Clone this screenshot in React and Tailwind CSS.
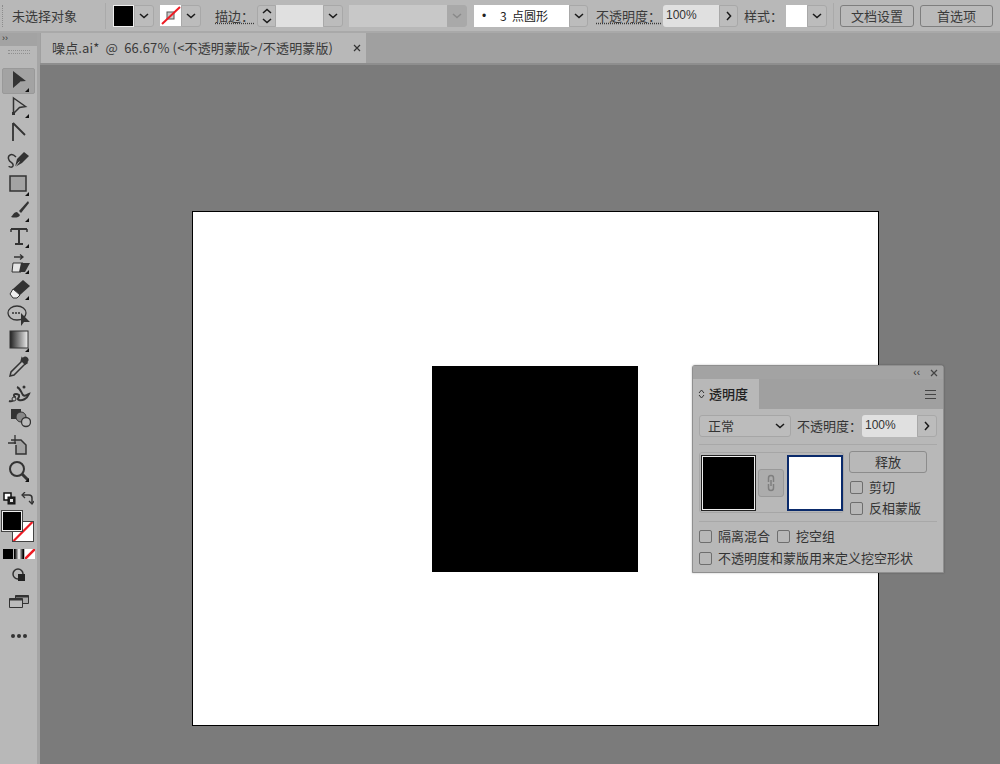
import React from 'react';

const cjk = 'font-["Noto_Sans_CJK_SC","Liberation_Sans",sans-serif]';

const Chevron = ({ className = '', color = '#1a1a1a' }) => (
    <svg width="10" height="6" viewBox="0 0 10 6" className={className}>
        <path d="M1 1l4 3.6L9 1" fill="none" stroke={color} strokeWidth="1.5" />
    </svg>
);

const ChevronBox = ({ w = 'w-[20px]', disabled }) => (
    <div className={`${w} h-[22px] flex items-center justify-center rounded-r-[3px] border border-[#a8a8a8] ${disabled ? 'bg-[#a9a9a9] border-[#a9a9a9]' : 'bg-[#bcbcbc]'}`}>
        <Chevron color={disabled ? '#8a8a8a' : '#1a1a1a'} />
    </div>
);

const NoStroke = () => (
    <svg width="21" height="21" viewBox="0 0 21 21" className="bg-white">
        <rect x="7" y="7" width="7" height="7" fill="#ccc" stroke="#555" strokeWidth="1" />
        <path d="M2 19L20 2" stroke="#ed1c24" strokeWidth="2" />
    </svg>
);

const Corner = () => <path d="M24 24h-4l4-4z" fill="#111" />;

// tools, top to bottom, in a 26x26 box
const tools = [
    <><path d="M8 3l13 10-6 .6 0 .4-7 6z" fill="#333" /><Corner /></>,
    <><path d="M8.500 4l12 8.500-6 1-6 6z" fill="none" stroke="#333" strokeWidth="1.500" /><path d="M7 18h3v3H7z" fill="#333" /><Corner /></>,
    <path d="M8 3v18M8 3l12 12" fill="none" stroke="#333" strokeWidth="1.800" />,
    <><path d="M10 21l2-8 7-7 5 4-7 7z" fill="#333" /><path d="M10 21l4.500-5.500" stroke="#bbb" strokeWidth="1" /><path d="M11 11C6 6 2 10 4 14c1 3 5 2 4 6-1 2-4 1-4 0" fill="none" stroke="#333" strokeWidth="1.500" /></>,
    <><rect x="5" y="4" width="16" height="15" fill="#a3a3a3" stroke="#333" strokeWidth="1.500" /><Corner /></>,
    <><path d="M23 3l-9 10 2 2 8-10z" fill="#333" /><path d="M12 14c-3 0-4 3-6 5 3 1 8 1 9-2z" fill="#333" /><Corner /></>,
    <><path d="M6 5h16M14 5v15M10 20h8" fill="none" stroke="#333" strokeWidth="2" /><path d="M6 5v3M22 5v3" stroke="#333" strokeWidth="1.500" /><Corner /></>,
    <><path d="M8 13l-1 9h9l2-9z" fill="#e4e4e4" stroke="#333" strokeWidth="1" /><path d="M16 13h9l-5 9h-6z" fill="#333" /><path d="M9 7h9M15 4.500L18 7l-3 2.500" fill="none" stroke="#333" strokeWidth="1.300" /><Corner /></>,
    <><path d="M8 13l10-9 7 6-10 9z" fill="#333" /><path d="M8 13l7 6-3 3H8l-3-4z" fill="#eee" stroke="#333" strokeWidth="1" /><Corner /></>,
    <><ellipse cx="12" cy="11" rx="9" ry="7" fill="#bbb" stroke="#333" strokeWidth="1.300" /><path d="M7 11h9" stroke="#333" strokeWidth="1.300" strokeDasharray="2 1" /><path d="M16 11v13l3-4h6z" fill="#333" /></>,
    <><defs><linearGradient id="grad"><stop offset="0" stopColor="#222" /><stop offset="1" stopColor="#eee" /></linearGradient></defs><rect x="5" y="3" width="18" height="17" fill="url(#grad)" stroke="#333" strokeWidth="1" /><Corner /></>,
    <><path d="M17 4l5 5-3 2-1 1-9 9-4 1 1-4 9-9 1-1z" fill="#bbb" stroke="#333" strokeWidth="1.500" /><path d="M18 3.500a3 3 0 014.500 4.500L20 11l-4-4z" fill="#333" /></>,
    <><path d="M4 21c3 1 6-1 6-4-3-3 1-4 4-2 1 3-3 4 0 5 3 1 8-1 10-6-3 1-4 3-6 1-2-3-3-7-6-8" fill="none" stroke="#333" strokeWidth="2" /><circle cx="9" cy="19" r="2" fill="#bbb" stroke="#333" /><circle cx="19" cy="7" r="1.500" fill="#333" /></>,
    <><rect x="6" y="3" width="10" height="10" fill="#333" /><circle cx="16" cy="11" r="5" fill="#888" stroke="#333" /><circle cx="21" cy="16" r="4.500" fill="#bbb" stroke="#333" strokeWidth="1.300" /></>,
    <><path d="M6 8h10l5 5v9H11V13" fill="#a3a3a3" stroke="#333" strokeWidth="1.500" /><path d="M3 11h8M10 3v9" fill="none" stroke="#333" strokeWidth="1.300" /></>,
    <><circle cx="12" cy="11" r="7" fill="none" stroke="#333" strokeWidth="2" /><path d="M17 16l6 6" stroke="#333" strokeWidth="3" /><Corner /></>,
];

const Tool = ({ children, active }) => (
    <div className={`w-[33px] h-[26px] flex items-center justify-center pr-[2px] ${active ? 'rounded-[2px] bg-[#a3a3a3] border border-[#999]' : ''}`}>
        <svg width="26" height="26" viewBox="0 0 26 26">{children}</svg>
    </div>
);

const FillStroke = () => (
    <div className="w-[33px] h-[32px] grid grid-cols-[10px_10px_12px] grid-rows-[10px_10px_11px]">
        <div className="col-start-2 col-span-2 row-start-2 row-span-2 border border-[#444] bg-white overflow-hidden">
            <svg width="100%" height="100%" viewBox="0 0 21 21"><path d="M0 21L21 0" stroke="#ed1c24" strokeWidth="2.500" /></svg>
        </div>
        <div className="col-start-1 col-span-2 row-start-1 row-span-2 border border-[#eee] outline outline-1 outline-[#444] bg-black z-10" />
    </div>
);

const Check = ({ label }) => (
    <div className="flex items-center gap-[6px]">
        <div className="w-[13px] h-[13px] rounded-[2px] border border-[#6e6e6e] bg-[#b8b8b8]" />
        <span className="text-[13px] leading-[16px] text-[#333]">{label}</span>
    </div>
);

const App = () => {
    return (
        <div className={`relative w-[1000px] h-[764px] overflow-hidden bg-[#7b7b7b] flex flex-col ${cjk}`}>
            {/* Control bar */}
            <div className="h-[33px] shrink-0 bg-[#b8b8b8] border-b-2 border-[#a9a9a9] flex items-center text-[13px] text-[#3a3a3a]">
                <div className="ml-[2px] w-[1px] h-[22px] border-l border-dotted border-[#8c8c8c]" />
                <span className="ml-[9px] w-[64px] tracking-[0px] whitespace-nowrap">未选择对象</span>
                <div className="ml-[29px] w-[1px] h-[26px] bg-[#aaa]" />
                <div className="ml-[7px] flex items-center">
                    <div className="w-[21px] h-[22px] bg-black border border-[#eee]" />
                    <ChevronBox />
                </div>
                <div className="ml-[6px] flex items-center">
                    <NoStroke />
                    <ChevronBox />
                </div>
                <span className="ml-[14px] w-[36px] underline decoration-dotted underline-offset-2 whitespace-nowrap">描边：</span>
                <div className="ml-[6px] flex items-center">
                    <div className="w-[19px] h-[22px] flex flex-col items-center justify-center gap-[4px] rounded-l-[3px] border border-[#a8a8a8] bg-[#bcbcbc]">
                        <Chevron className="rotate-180" />
                        <Chevron />
                    </div>
                    <div className="w-[47px] h-[22px] bg-[#e0e0e0]" />
                    <ChevronBox />
                </div>
                <div className="ml-[6px] w-[98px] h-[22px] bg-[#c8c8c8]" />
                <ChevronBox disabled />
                <div className="ml-[7px] w-[95px] h-[22px] bg-white flex items-center pl-[8px] text-[12px] text-[#222] whitespace-pre">
                    <span className="w-[18px] font-['Liberation_Sans']">•</span>
                    <span>3  点圆形</span>
                </div>
                <ChevronBox w="w-[19px]" />
                <span className="ml-[8px] w-[61px] underline decoration-dotted underline-offset-2 whitespace-nowrap">不透明度：</span>
                <div className="ml-[6px] w-[56px] h-[22px] bg-[#e0e0e0] rounded-l-[3px] pl-[3px] text-[12px] leading-[20px] text-[#333] font-['Liberation_Sans']">100%</div>
                <div className="w-[19px] h-[22px] flex items-center justify-center rounded-r-[3px] border border-[#a8a8a8] bg-[#bcbcbc]">
                    <Chevron className="-rotate-90" />
                </div>
                <span className="ml-[6px] w-[36px] whitespace-nowrap">样式：</span>
                <div className="ml-[6px] w-[21px] h-[22px] bg-white" />
                <ChevronBox />
                <div className="ml-[6px] w-[1px] h-[26px] bg-[#aaa]" />
                <div className="ml-[6px] w-[74px] h-[22px] flex items-center justify-center rounded-[3px] border border-[#7e7e7e] bg-[#bababa] whitespace-nowrap">文档设置</div>
                <div className="ml-[6px] w-[73px] h-[22px] flex items-center justify-center rounded-[3px] border border-[#7e7e7e] bg-[#bababa] whitespace-nowrap">首选项</div>
            </div>

            <div className="flex flex-1 min-h-0">
                {/* Tools */}
                <div className="w-[37px] shrink-0 bg-[#b8b8b8] flex flex-col items-center">
                    <div className="w-full h-[13px] bg-[#a3a3a3] text-[9px] leading-[11px] pl-[2px] text-[#333] font-['Liberation_Sans']">››</div>
                    <div className="mt-[4px] w-[22px] h-[4px] border-y border-dotted border-[#8f8f8f]" />
                    <div className="mt-[14px] flex flex-col items-center">
                        {tools.map((t, i) => (
                            <Tool key={i} active={i === 0}>{t}</Tool>
                        ))}
                    </div>
                    <div className="mt-[4px] w-[33px] h-[20px] flex items-center justify-between px-[1px]">
                        <svg width="13" height="13" viewBox="0 0 13 13"><rect x="1" y="1" width="7" height="7" fill="#fff" stroke="#111" strokeWidth="1.500" /><rect x="5" y="5" width="7" height="7" fill="#222" stroke="#111" /><rect x="7" y="7" width="3" height="3" fill="#ddd" /></svg>
                        <svg width="13" height="13" viewBox="0 0 13 13"><path d="M1 3h7a3 3 0 013 3v6" fill="none" stroke="#333" strokeWidth="1.500" /><path d="M4 0L1 3l3 3M8 9l3 3 2-3" fill="none" stroke="#333" strokeWidth="1.300" /></svg>
                    </div>
                    <div className="mt-[3px]"><FillStroke /></div>
                    <div className="mt-[6px] w-[32px] h-[10px] flex gap-[1px]">
                        <div className="flex-1 bg-black" />
                        <div className="flex-1 bg-gradient-to-r from-black via-white to-black" />
                        <div className="flex-1 bg-white overflow-hidden">
                            <svg width="100%" height="100%" viewBox="0 0 10 10"><path d="M0 10L10 0" stroke="#ed1c24" strokeWidth="2.500" /></svg>
                        </div>
                    </div>
                    <div className="mt-[9px]">
                        <svg width="14" height="14" viewBox="0 0 14 14"><circle cx="6" cy="6" r="5" fill="none" stroke="#333" strokeWidth="1.500" /><rect x="6" y="6" width="7" height="7" fill="#222" /></svg>
                    </div>
                    <div className="mt-[11px]">
                        <svg width="20" height="15" viewBox="0 0 20 15"><path d="M6.500 2.500h13v8h-13z" fill="#a8a8a8" stroke="#333" /><path d="M6.500 2.500h13v2h-13z" fill="#333" /><path d="M.5 5.500h13v9H.5z" fill="#bbb" stroke="#333" /><path d="M.5 5.500h13v2H.5z" fill="#333" /></svg>
                    </div>
                    <div className="mt-[26px] flex gap-[2px]">
                        <div className="w-[4px] h-[4px] rounded-full bg-[#333]" />
                        <div className="w-[4px] h-[4px] rounded-full bg-[#333]" />
                        <div className="w-[4px] h-[4px] rounded-full bg-[#333]" />
                    </div>
                </div>
                <div className="w-[3px] shrink-0 bg-[#a5a5a5]" />

                <div className="flex-1 flex flex-col min-w-0">
                    {/* Tab strip */}
                    <div className="h-[32px] shrink-0 bg-[#a0a0a0] border-b-2 border-[#8e8e8e] pl-[1px]">
                        <div className="w-[325px] h-[30px] bg-[#b8b8b8] flex items-center pl-[11px] text-[13px] tracking-[0.15px] text-[#3a3a3a] whitespace-pre">
                            <span className="w-[300px]">噪点.ai*  @  66.67% (&lt;不透明蒙版&gt;/不透明蒙版)</span>
                            <svg width="8" height="8" viewBox="0 0 8 8" className="ml-[1px]"><path d="M1 1l6 6M7 1L1 7" stroke="#333" strokeWidth="1.200" /></svg>
                        </div>
                    </div>
                    {/* Canvas */}
                    <div className="flex-1 pl-[152px] pt-[146px]">
                        <div className="w-[687px] h-[515px] bg-white border border-black pl-[239px] pt-[154px]">
                            <div className="w-[206px] h-[206px] bg-black" />
                        </div>
                    </div>
                </div>
            </div>

            {/* Floating transparency panel */}
            <div className="absolute left-[692px] top-[365px] w-[252px] h-[208px] bg-[#b8b8b8] border border-[#8f8f8f] rounded-t-[3px] flex flex-col text-[13px] text-[#333] shadow-[0_0_2px_rgba(0,0,0,0.3)]">
                <div className="h-[13px] bg-[#a3a3a3] flex items-center justify-end gap-[10px] pr-[5px]">
                    <span className="text-[10px] leading-[10px] text-[#333] font-['Liberation_Sans']">‹‹</span>
                    <svg width="8" height="8" viewBox="0 0 8 8"><path d="M1 1l6 6M7 1L1 7" stroke="#444" strokeWidth="1.200" /></svg>
                </div>
                <div className="h-[30px] bg-[#a0a0a0] flex items-center">
                    <div className="w-[66px] h-full bg-[#b8b8b8] flex items-center pl-[5px] gap-[4px]">
                        <svg width="7" height="10" viewBox="0 0 7 10"><path d="M1 4l2.500-3L6 4M1 6l2.500 3L6 6" fill="none" stroke="#333" /></svg>
                        <span className="font-medium text-[#222] whitespace-nowrap">透明度</span>
                    </div>
                    <div className="ml-auto mr-[7px] w-[11px] h-[9px] border-y border-[#444] flex items-center">
                        <div className="w-full h-[1px] bg-[#444]" />
                    </div>
                </div>
                <div className="px-[6px] pt-[6px] flex flex-col">
                    <div className="flex items-center">
                        <div className="w-[92px] h-[22px] flex items-center justify-between pl-[8px] pr-[5px] rounded-[3px] border border-[#a6a6a6] bg-[#bcbcbc]">
                            <span>正常</span>
                            <Chevron />
                        </div>
                        <span className="ml-[6px] w-[65px] whitespace-nowrap">不透明度：</span>
                        <div className="w-[55px] h-[22px] bg-[#e0e0e0] rounded-l-[3px] pl-[3px] text-[12px] leading-[20px] font-['Liberation_Sans']">100%</div>
                        <div className="w-[20px] h-[22px] flex items-center justify-center rounded-r-[3px] border border-[#a8a8a8] bg-[#bcbcbc]">
                            <Chevron className="-rotate-90" />
                        </div>
                    </div>
                    <div className="mt-[7px] h-[1px] bg-[#a8a8a8]" />
                    <div className="mt-[7px] flex">
                        <div className="w-[145px] h-[61px] rounded-[3px] border border-[#a6a6a6] pl-[2px] pt-[3px] flex items-start">
                            <div className="w-[53px] h-[54px] bg-black border border-[#eee] outline outline-1 outline-[#222]" />
                            <div className="ml-[3px] mt-[13px] w-[27px] h-[28px] rounded-[3px] border border-[#999] bg-[#acacac] flex items-center justify-center">
                                <svg width="10" height="18" viewBox="0 0 10 18"><path d="M2.500 8V4a2.500 2.500 0 015 0v4M2.500 10v4a2.500 2.500 0 005 0v-4M5 6v6" fill="none" stroke="#7f7f7f" strokeWidth="1.500" /></svg>
                            </div>
                            <div className="ml-[3px] -mt-[1px] w-[56px] h-[56px] bg-white border-2 border-[#0a2a6b]" />
                        </div>
                        <div className="ml-[5px] -mt-[1px] flex flex-col">
                            <div className="w-[78px] h-[22px] flex items-center justify-center rounded-[3px] border border-[#8c8c8c] bg-[#b8b8b8]">释放</div>
                            <div className="mt-[6px] ml-[1px]"><Check label="剪切" /></div>
                            <div className="mt-[5px] ml-[1px]"><Check label="反相蒙版" /></div>
                        </div>
                    </div>
                    <div className="mt-[5px] h-[1px] bg-[#a8a8a8]" />
                    <div className="mt-[6px] flex items-center gap-[7px]">
                        <Check label="隔离混合" />
                        <Check label="挖空组" />
                    </div>
                    <div className="mt-[6px]"><Check label="不透明度和蒙版用来定义挖空形状" /></div>
                </div>
            </div>
        </div>
    );
};

export default App;
